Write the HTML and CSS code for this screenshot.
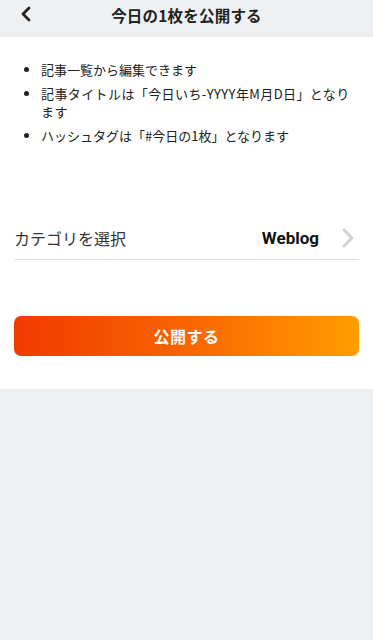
FILE: index.html
```html
<!DOCTYPE html>
<html lang="ja">
<head>
<meta charset="utf-8">
<link rel="stylesheet" href="styles.css">
</head>
<body>
<header class="header">
  <button class="back" aria-label="戻る">
    <svg width="14" height="16" viewBox="0 0 14 16"><path d="M10 2 L4 8 L10 14" fill="none" stroke="#222" stroke-width="2.8" stroke-linecap="round" stroke-linejoin="round"/></svg>
  </button>
  <h1 class="title">今日の1枚を公開する</h1>
</header>
<main class="content">
  <ul class="notes">
    <li>記事一覧から編集できます</li>
    <li class="wide">記事タイトルは「今日いち-YYYY年M月D日」となります</li>
    <li>ハッシュタグは「#今日の1枚」となります</li>
  </ul>
  <div class="row">
    <span class="row-label">カテゴリを選択</span>
    <span class="row-value">Weblog</span>
    <svg class="chev" width="14" height="22" viewBox="0 0 14 22"><path d="M3 3 L11 11 L3 19" fill="none" stroke="#d2d2d4" stroke-width="3" stroke-linecap="round" stroke-linejoin="round"/></svg>
  </div>
  <button class="publish">公開する</button>
</main>
</body>
</html>
```
FILE: styles.css
```css
html, body {
  margin: 0;
  padding: 0;
  background: #eff0f2;
  font-family: "Noto Sans CJK JP", "Noto Sans", sans-serif;
  color: #222;
}
.header {
  height: 37px;
  background: #eff0f2;
  display: flex;
  align-items: center;
  justify-content: center;
  position: relative;
}
.back {
  position: absolute;
  left: 19px;
  top: 6px;
  border: 0;
  background: none;
  padding: 0;
  width: 14px;
  height: 16px;
}
.title {
  margin: 0;
  font-size: 15.5px;
  font-weight: 700;
  color: #222;
  margin-top: -7px;
  letter-spacing: 0.2px;
}
.content {
  background: #fff;
  padding: 24px 14px 33px;
}
.notes {
  margin: 0;
  padding: 0 0 0 27px;
  font-size: 13px;
  line-height: 18px;
  color: #222;
}
.notes li {
  margin-bottom: 6px;
}
.notes .wide {
  letter-spacing: 0.4px;
}
.row {
  margin-top: 72px;
  height: 42px;
  border-bottom: 1px solid #e1e2e6;
  display: flex;
  align-items: center;
}
.row-label {
  flex: 1;
  font-size: 16px;
  color: #333;
}
.row-value {
  font-family: "Roboto", "Liberation Sans", sans-serif;
  font-weight: 700;
  font-size: 17px;
  color: #111;
  margin-right: 22px;
}
.chev {
  margin-right: 4px;
}
.publish {
  display: block;
  width: 100%;
  margin-top: 56px;
  height: 40px;
  border: 0;
  border-radius: 7px;
  background: linear-gradient(90deg, #f03a00 0%, #f86500 50%, #ff9e00 100%);
  color: #fff;
  font-family: "Noto Sans CJK JP", "Noto Sans", sans-serif;
  font-size: 16px;
  font-weight: 700;
  letter-spacing: 0.5px;
}
```
